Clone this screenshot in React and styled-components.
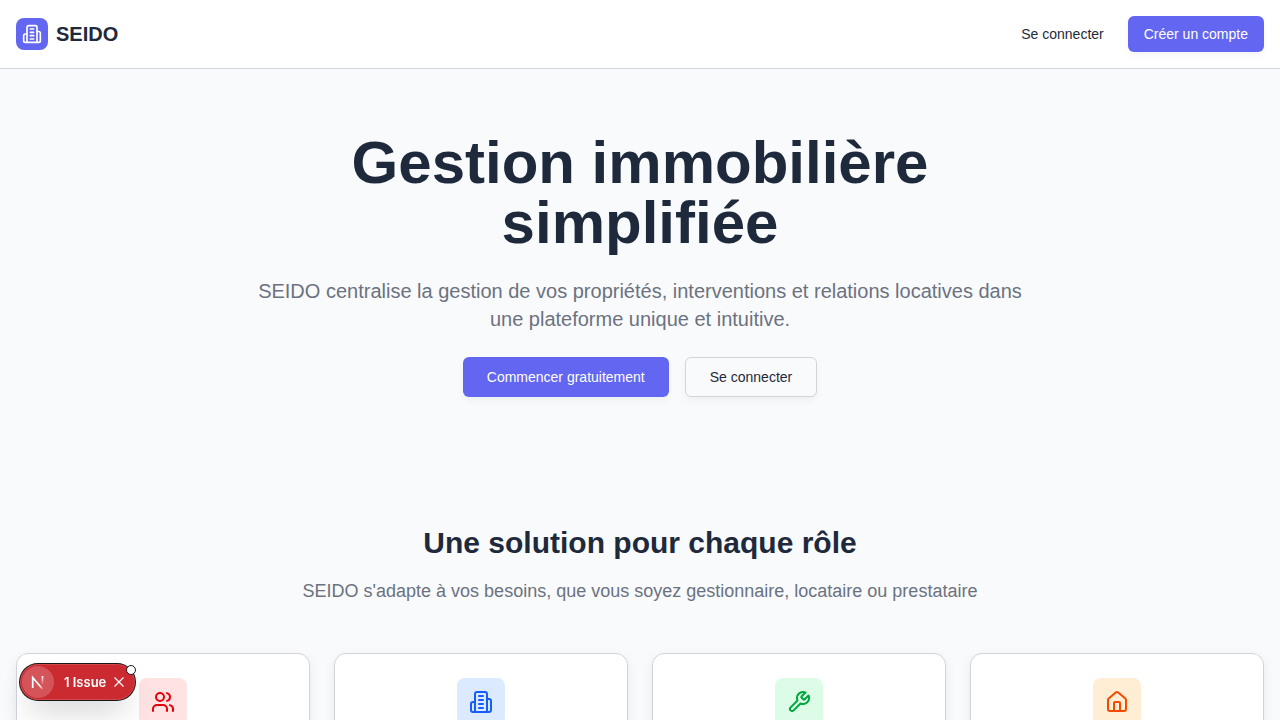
import React from "react";
import styled, { createGlobalStyle, css } from "styled-components";
import { Users, House } from "lucide-react";

const GlobalStyle = createGlobalStyle`
  *, *::before, *::after { box-sizing: border-box; }
  body {
    margin: 0;
    background: #f9fafc;
    color: #1e293b;
    font-family: "Liberation Sans", Arial, sans-serif;
    font-size: 16px;
    line-height: 24px;
  }
  h1, h2, p, ul { margin: 0; padding: 0; }
`;

const Header = styled.header`
  background: #ffffff;
  border-bottom: 1px solid #d1d5db;
`;

const HeaderInner = styled.div`
  display: flex;
  align-items: center;
  justify-content: space-between;
  padding: 16px;
`;

const Brand = styled.a`
  display: flex;
  align-items: center;
  gap: 8px;
  color: #1e293b;
  font-size: 20px;
  line-height: 28px;
  font-weight: 700;
  text-decoration: none;
`;

const BrandMark = styled.span`
  display: grid;
  place-items: center;
  width: 32px;
  height: 32px;
  border-radius: 8px;
  background: #6366f1;
  color: #ffffff;
`;

const Nav = styled.nav`
  display: flex;
  gap: 8px;
`;

const buttonKinds = {
  primary: css`
    background: #6366f1;
    color: #ffffff;
    box-shadow: 0 4px 8px -1px rgba(0, 0, 0, 0.05);
  `,
  outline: css`
    background: #f9fafc;
    border: 1px solid #d1d5db;
    box-shadow: 0 4px 8px -1px rgba(0, 0, 0, 0.05);
  `,
  ghost: css`
    background: transparent;
  `,
};

const Button = styled.button`
  display: inline-flex;
  align-items: center;
  justify-content: center;
  height: ${({ $large }) => ($large ? "40px" : "36px")};
  padding: 0 ${({ $large }) => ($large ? "24px" : "16px")};
  border: 0;
  border-radius: 6px;
  color: #1e293b;
  font-family: inherit;
  font-size: 14px;
  line-height: 20px;
  font-weight: 500;
  white-space: nowrap;
  cursor: pointer;
  ${({ $kind }) => buttonKinds[$kind]}
`;

const Hero = styled.section`
  padding: 64px 16px;
`;

const HeroInner = styled.div`
  display: flex;
  flex-direction: column;
  align-items: center;
  gap: 24px;
  max-width: 768px;
  margin: 0 auto;
  text-align: center;
`;

const Title = styled.h1`
  font-size: 60px;
  line-height: 60px;
  font-weight: 700;
`;

const Lead = styled.p`
  color: #6b7280;
  font-size: 20px;
  line-height: 28px;
`;

const Actions = styled.div`
  display: flex;
  flex-wrap: wrap;
  justify-content: center;
  gap: 16px;
`;

const Roles = styled.section`
  padding: 64px 16px;
`;

const SectionHead = styled.div`
  display: flex;
  flex-direction: column;
  gap: 16px;
  margin-bottom: 48px;
  text-align: center;
`;

const SectionTitle = styled.h2`
  font-size: 30px;
  line-height: 36px;
  font-weight: 700;
`;

const SectionText = styled.p`
  color: #6b7280;
  font-size: 18px;
  line-height: 28px;
`;

const RoleGrid = styled.ul`
  display: grid;
  grid-template-columns: repeat(4, 1fr);
  gap: 24px;
  list-style: none;
`;

const RoleCard = styled.li`
  display: flex;
  justify-content: center;
  padding: 24px 24px 48px;
  border: 1px solid #d1d5db;
  border-radius: 12px;
  background: #ffffff;
  box-shadow: 0 4px 12px rgba(0, 0, 0, 0.07);
`;

const RoleIcon = styled.span`
  display: grid;
  place-items: center;
  width: 48px;
  height: 48px;
  border-radius: 8px;
  background: ${({ $bg }) => $bg};
  color: ${({ $fg }) => $fg};
`;

const IssuePill = styled.div`
  position: fixed;
  left: 20px;
  bottom: 20px;
  display: flex;
  align-items: center;
  height: 36px;
  padding: 2px 4px 2px 2px;
  border-radius: 18px;
  background: #ca2a30;
  color: #ffffff;
  box-shadow: 0 0 0 1px #171717, inset 0 0 0 1px rgba(255, 255, 255, 0.14),
    0 16px 32px -8px rgba(0, 0, 0, 0.24);
`;

const PillButton = styled.button`
  display: flex;
  align-items: center;
  justify-content: center;
  padding: 0;
  border: 0;
  background: transparent;
  color: inherit;
  font-family: Inter, "Liberation Sans", sans-serif;
  font-size: 13px;
  line-height: 16px;
  font-weight: 600;
  cursor: pointer;
`;

const LogoButton = styled(PillButton)`
  width: 32px;
  height: 32px;
  margin-right: 10px;
  border-radius: 50%;
  background: rgba(255, 255, 255, 0.2);
`;

const CloseButton = styled(PillButton)`
  width: 24px;
  height: 24px;
  margin-left: 1px;
`;

const PillDot = styled.span`
  position: absolute;
  top: 1px;
  right: -1px;
  width: 10px;
  height: 10px;
  border: 1px solid #171717;
  border-radius: 50%;
  background: #ffffff;
`;

function LineIcon({ size = 24, children }) {
  return (
    <svg
      width={size}
      height={size}
      viewBox="0 0 24 24"
      fill="none"
      stroke="currentColor"
      strokeWidth="2"
      strokeLinecap="round"
      strokeLinejoin="round"
      aria-hidden="true"
    >
      {children}
    </svg>
  );
}

function Building({ size }) {
  return (
    <LineIcon size={size}>
      <path d="M6 22V4a2 2 0 0 1 2-2h8a2 2 0 0 1 2 2v18Z" />
      <path d="M6 12H4a2 2 0 0 0-2 2v6a2 2 0 0 0 2 2h2" />
      <path d="M18 9h2a2 2 0 0 1 2 2v9a2 2 0 0 1-2 2h-2" />
      <path d="M10 6h4M10 10h4M10 14h4M10 18h4" />
    </LineIcon>
  );
}

function Wrench() {
  return (
    <LineIcon>
      <path d="M14.7 6.3a1 1 0 0 0 0 1.4l1.6 1.6a1 1 0 0 0 1.4 0l3.77-3.77a6 6 0 0 1-7.94 7.94l-6.91 6.91a2.12 2.12 0 0 1-3-3l6.91-6.91a6 6 0 0 1 7.94-7.94l-3.76 3.76z" />
    </LineIcon>
  );
}

function NextMark() {
  return (
    <svg width="32" height="32" viewBox="0 0 32 32" fill="none" aria-hidden="true">
      <defs>
        <linearGradient id="markDiagonal" x1="11" y1="10" x2="21" y2="23" gradientUnits="userSpaceOnUse">
          <stop stopColor="#fff" />
          <stop offset="0.7" stopColor="#fff" />
          <stop offset="1" stopColor="#fff" stopOpacity="0.2" />
        </linearGradient>
        <linearGradient id="markBar" x1="20" y1="10" x2="20" y2="19" gradientUnits="userSpaceOnUse">
          <stop stopColor="#fff" />
          <stop offset="1" stopColor="#fff" stopOpacity="0" />
        </linearGradient>
      </defs>
      <path d="M10.7 22V11.5L20.5 23" stroke="url(#markDiagonal)" strokeWidth="1.7" />
      <path d="M20.5 10v9" stroke="url(#markBar)" strokeWidth="1.7" />
    </svg>
  );
}

const roles = [
  { id: "team", bg: "#ffe2e2", fg: "#e7000b", icon: <Users size={24} /> },
  { id: "manager", bg: "#dbeafe", fg: "#155dfc", icon: <Building size={24} /> },
  { id: "provider", bg: "#dcfce7", fg: "#00a63e", icon: <Wrench /> },
  { id: "tenant", bg: "#ffedd4", fg: "#f54900", icon: <House size={24} /> },
];

export default function App() {
  return (
    <>
      <GlobalStyle />
      <Header>
        <HeaderInner>
          <Brand href="#">
            <BrandMark>
              <Building size={20} />
            </BrandMark>
            SEIDO
          </Brand>
          <Nav>
            <Button $kind="ghost">Se connecter</Button>
            <Button $kind="primary">Créer un compte</Button>
          </Nav>
        </HeaderInner>
      </Header>
      <main>
        <Hero>
          <HeroInner>
            <Title>Gestion immobilière simplifiée</Title>
            <Lead>
              SEIDO centralise la gestion de vos propriétés, interventions et
              relations locatives dans une plateforme unique et intuitive.
            </Lead>
            <Actions>
              <Button $kind="primary" $large>Commencer gratuitement</Button>
              <Button $kind="outline" $large>Se connecter</Button>
            </Actions>
          </HeroInner>
        </Hero>
        <Roles>
          <SectionHead>
            <SectionTitle>Une solution pour chaque rôle</SectionTitle>
            <SectionText>
              SEIDO s'adapte à vos besoins, que vous soyez gestionnaire,
              locataire ou prestataire
            </SectionText>
          </SectionHead>
          <RoleGrid>
            {roles.map((role) => (
              <RoleCard key={role.id}>
                <RoleIcon $bg={role.bg} $fg={role.fg}>{role.icon}</RoleIcon>
              </RoleCard>
            ))}
          </RoleGrid>
        </Roles>
      </main>
      <IssuePill>
        <LogoButton type="button">
          <NextMark />
        </LogoButton>
        <PillButton type="button">1 Issue</PillButton>
        <CloseButton type="button">
          <svg width="10" height="10" viewBox="0 0 10 10" stroke="currentColor" strokeWidth="1.2" aria-hidden="true">
            <path d="M0.5 0.5l9 9M9.5 0.5l-9 9" />
          </svg>
        </CloseButton>
        <PillDot />
      </IssuePill>
    </>
  );
}
